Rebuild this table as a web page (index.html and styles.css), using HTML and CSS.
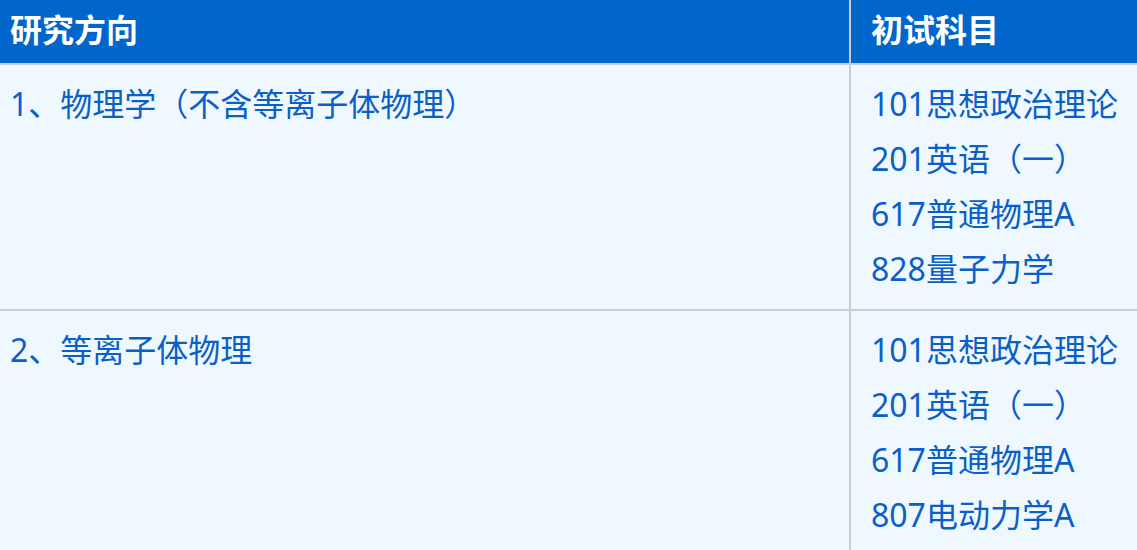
FILE: index.html
```html
<!DOCTYPE html>
<html lang="zh-CN">
<head>
<meta charset="utf-8">
<title>研究方向与初试科目</title>
<link rel="stylesheet" href="styles.css">
</head>
<body>
<div class="table">
  <div class="cell head first">研究方向</div>
  <div class="cell head second">初试科目</div>

  <div class="cell first">1、物理学（不含等离子体物理）</div>
  <div class="cell second">
    <div class="line">101思想政治理论</div>
    <div class="line">201英语（一）</div>
    <div class="line">617普通物理A</div>
    <div class="line">828量子力学</div>
  </div>

  <div class="cell first">2、等离子体物理</div>
  <div class="cell second">
    <div class="line">101思想政治理论</div>
    <div class="line">201英语（一）</div>
    <div class="line">617普通物理A</div>
    <div class="line">807电动力学A</div>
  </div>
</div>
</body>
</html>
```

FILE: styles.css
```css
* { box-sizing: border-box; }
html, body {
  margin: 0;
  padding: 0;
  background: #f0f8ff;
  overflow: hidden;
}
body {
  font-family: "Noto Sans", "Noto Sans CJK SC", sans-serif;
  font-size: 32px;
  color: #0a5fc8;
}
.table {
  display: grid;
  grid-template-columns: 851px 1fr;
  width: 1137px;
}
.cell {
  background: #f0f8ff;
  border-bottom: 2px solid #cccccc;
  line-height: 55px;
  padding: 11px 10px 13px 10px;
}
.cell.first {
  border-right: 2px solid #cccccc;
  padding-left: 10px;
}
.cell.second {
  padding-left: 20px;
}
.cell.head {
  background: #0066cc;
  color: #ffffff;
  font-weight: 700;
  height: 65px;
  line-height: 59px;
  padding-top: 0;
  padding-bottom: 0;
}
.line {
  white-space: nowrap;
}
```
